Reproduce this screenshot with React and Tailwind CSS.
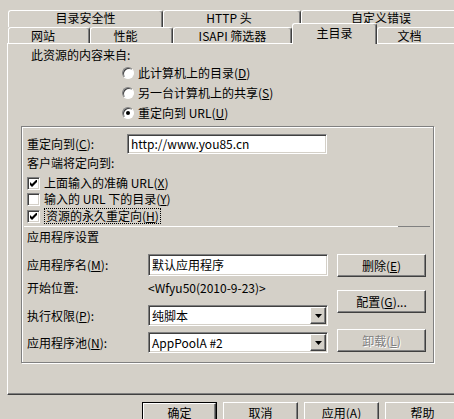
import React from 'react';

const raised = "border border-t-white border-l-white border-r-[#404040] border-b-[#404040] shadow-[inset_-1px_-1px_0_#808080]";
const sunken = "border border-t-[#808080] border-l-[#808080] border-r-white border-b-white shadow-[inset_1px_1px_0_#404040,inset_-1px_-1px_0_#d4d0c8]";

// mnemonic letter, e.g. (D)
const Key = ({ k }) => (
    <>(<span className="underline underline-offset-[1px]">{k}</span>)</>
);

const Tab = ({ w, className = '', children }) => (
    <div className={`${w} h-full flex items-center justify-center rounded-t-[3px] border-t border-l border-r border-t-white border-l-white border-r-[#404040] shadow-[inset_-1px_0_0_#808080] ${className}`}>
        {children}
    </div>
);

const Radio = ({ checked, children }) => (
    <div className="h-[20px] flex items-center gap-[4px]">
        <div className="w-[12px] h-[12px] rounded-full bg-white border border-t-[#808080] border-l-[#808080] border-r-white border-b-white shadow-[inset_1px_1px_0_#404040] flex items-center justify-center">
            {checked && <div className="w-[4px] h-[4px] rounded-full bg-black" />}
        </div>
        <span>{children}</span>
    </div>
);

const Checkbox = ({ checked, focused, className = '', children }) => (
    <div className={`h-[16px] pl-[5px] flex items-center gap-[4px] ${className}`}>
        <div className={`w-[13px] h-[13px] bg-white ${sunken} flex items-center justify-center`}>
            {checked && (
                <svg width="7" height="7" viewBox="0 0 7 7">
                    <polygon points="0,2 2,4 7,-1 7,2 2,7 0,5" fill="#000" />
                </svg>
            )}
        </div>
        <span className={focused ? "h-[16px] px-[1px] border border-dotted border-black leading-[14px]" : ""}>{children}</span>
    </div>
);

const Button = ({ className = '', disabled, children }) => (
    <div className={`h-[23px] flex items-center justify-center ${raised} ${disabled ? "text-[#808080] [text-shadow:1px_1px_0_#fff]" : ""} ${className}`}>
        {children}
    </div>
);

const Select = ({ children }) => (
    <div className={`w-[180px] h-[21px] bg-white ${sunken} flex items-stretch`}>
        <span className="flex-1 flex items-center pl-[3px]">{children}</span>
        <div className={`w-[16px] my-[1px] mr-[1px] bg-[#d4d0c8] ${raised} flex items-center justify-center`}>
            <svg width="7" height="4" viewBox="0 0 7 4">
                <polygon points="0,0 7,0 3.5,4" fill="#000" />
            </svg>
        </div>
    </div>
);

export default function App() {
    return (
        <div className="w-[454px] h-[419px] overflow-hidden bg-[#d4d0c8] text-[12px] leading-[16px] text-black font-['Noto_Sans_CJK_SC','Liberation_Sans',sans-serif]">
            {/* back tab row */}
            <div className="pt-[10px] pl-[8px] flex h-[27px] w-[480px]">
                <Tab w="w-[155px]" className="pb-[2px]">目录安全性</Tab>
                <Tab w="w-[138px]" className="pr-[6px] pb-[2px]">HTTP 头</Tab>
                <Tab w="w-[160px]" className="pb-[2px]">自定义错误</Tab>
            </div>
            {/* front tab row */}
            <div className="pl-[8px] flex items-end h-[16px] w-[480px]">
                <Tab w="w-[82px]" className="pr-[12px]">网站</Tab>
                <Tab w="w-[83px]" className="pr-[12px]">性能</Tab>
                <Tab w="w-[119px]">ISAPI 筛选器</Tab>
                <div className="relative z-10 w-[85px] h-[21px] -mb-px pb-[3px] bg-[#d4d0c8] flex items-center justify-center rounded-t-[3px] border-t border-l border-r border-t-white border-l-white border-r-[#404040] shadow-[inset_-1px_0_0_#808080]">
                    主目录
                </div>
                <Tab w="w-[83px]" className="pr-[18px]">文档</Tab>
            </div>

            {/* page */}
            <div className="ml-[7px] w-[460px] h-[352px] border-t border-l border-b border-t-white border-l-white border-b-[#404040] shadow-[inset_0_-1px_0_#808080]">
                <div className="mt-[3px] pl-[23px] h-[16px] flex items-center">此资源的内容来自:</div>
                <div className="pl-[114px]">
                    <Radio>此计算机上的目录<Key k="D" /></Radio>
                    <Radio>另一台计算机上的共享<Key k="S" /></Radio>
                    <Radio checked>重定向到 URL<Key k="U" /></Radio>
                </div>

                {/* group box */}
                <div className="mt-[3px] ml-[13px] w-[413px] h-[237px] border border-[#808080] shadow-[inset_1px_1px_0_#fff,1px_1px_0_#fff]">
                    <div className="mt-[7px] pl-[5px] h-[20px] flex items-center">
                        <div className="w-[100px]">重定向到<Key k="C" />:</div>
                        <div className={`w-[200px] h-[20px] bg-white ${sunken} flex items-center pl-[3px]`}>http://www.you85.cn</div>
                    </div>
                    <div className="mt-[1px] pl-[5px] h-[16px] flex items-center">客户端将定向到:</div>
                    <div className="mt-[4px]">
                        <Checkbox checked>上面输入的准确 URL<Key k="X" /></Checkbox>
                        <Checkbox>输入的 URL 下的目录<Key k="Y" /></Checkbox>
                        <Checkbox checked focused className="mt-[1px]">资源的永久重定向<Key k="H" /></Checkbox>
                    </div>
                    <div className="mt-[2px] ml-[2px] mr-[3px] h-px flex">
                        <div className="flex-1 bg-white" />
                        <div className="w-[32px] bg-[#808080]" />
                    </div>
                    <div className="mt-[2px] pl-[5px] h-[16px] flex items-center">应用程序设置</div>

                    <div className="pl-[5px] flex">
                        <div>
                            <div className="mt-[9px] h-[22px] flex items-center">
                                <div className="w-[121px]">应用程序名<Key k="M" />:</div>
                                <div className={`w-[180px] h-[22px] bg-white ${sunken} flex items-center pl-[3px]`}>默认应用程序</div>
                            </div>
                            <div className="mt-[4px] h-[16px] flex items-center">
                                <div className="w-[121px]">开始位置:</div>
                                <div>&lt;Wfyu50(2010-9-23)&gt;</div>
                            </div>
                            <div className="mt-[9px] h-[21px] flex items-center">
                                <div className="w-[121px]">执行权限<Key k="P" />:</div>
                                <Select>纯脚本</Select>
                            </div>
                            <div className="mt-[6px] h-[21px] flex items-center">
                                <div className="w-[121px]">应用程序池<Key k="N" />:</div>
                                <Select>AppPoolA #2</Select>
                            </div>
                        </div>
                        <div className="ml-[9px] w-[89px]">
                            <Button className="mt-[9px]">删除<Key k="E" /></Button>
                            <Button className="mt-[13px]">配置<Key k="G" />...</Button>
                            <Button className="mt-[16px]" disabled>卸载<Key k="L" /></Button>
                        </div>
                    </div>
                </div>
            </div>

            {/* dialog buttons, cut off by the window's bottom edge */}
            <div className="mt-[7px] pl-[142px] flex gap-[6px] w-[540px]">
                <div className="w-[75px] h-[24px] border border-black">
                    <Button className="h-full !items-start pt-[2px] leading-[13px]">确定</Button>
                </div>
                <Button className="w-[75px] h-[24px] !items-start pt-[3px] leading-[13px]">取消</Button>
                <Button className="w-[75px] h-[24px] !items-start pt-[3px] leading-[13px]">应用<Key k="A" /></Button>
                <Button className="w-[75px] h-[24px] !items-start pt-[3px] leading-[13px]">帮助</Button>
            </div>
        </div>
    );
}
